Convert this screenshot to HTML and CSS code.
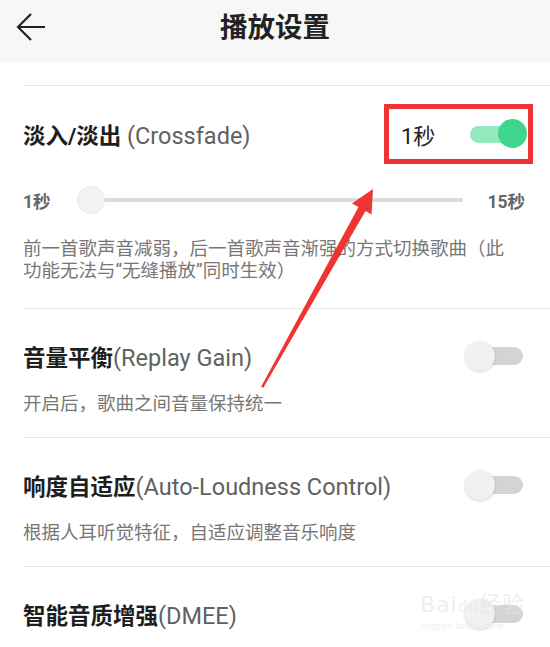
FILE: index.html
```html
<!DOCTYPE html>
<html lang="zh-CN">
<head>
    <meta charset="UTF-8">
    <meta name="viewport" content="width=device-width, initial-scale=1.0">
    <title>播放设置</title>
    <link rel="stylesheet" href="styles.css">
</head>
<body>
    <div class="page">
        <!-- 顶部栏 -->
        <div class="topbar">
            <div class="back">
                <svg width="30" height="30" viewBox="0 0 30 30">
                    <path d="M29 14 H3 M15 1 L2 14 L15 27" fill="none" stroke="#222" stroke-width="2.2"/>
                </svg>
            </div>
            <h1>播放设置</h1>
            <div></div>
        </div>

        <div class="list">
            <!-- 淡入淡出 -->
            <div class="item first">
                <div class="head crossfade">
                    <div class="name">淡入/淡出 <span class="en">(Crossfade)</span></div>
                    <div class="mark">
                        <span class="value">1秒</span>
                        <span class="switch on"></span>
                    </div>
                </div>
                <div class="slider">
                    <span class="end">1秒</span>
                    <div class="track"><span class="knob"></span></div>
                    <span class="end">15秒</span>
                </div>
                <p class="desc">前一首歌声音减弱，后一首歌声音渐强的方式切换歌曲（此功能无法与“无缝播放”同时生效）</p>
            </div>

            <!-- 音量平衡 -->
            <div class="item">
                <div class="head">
                    <div class="name">音量平衡<span class="en">(Replay Gain)</span></div>
                    <span class="switch"></span>
                </div>
                <p class="desc">开启后，歌曲之间音量保持统一</p>
            </div>

            <!-- 响度自适应 -->
            <div class="item">
                <div class="head">
                    <div class="name">响度自适应<span class="en">(Auto-Loudness Control)</span></div>
                    <span class="switch"></span>
                </div>
                <p class="desc">根据人耳听觉特征，自适应调整音乐响度</p>
            </div>

            <!-- 智能音质增强 -->
            <div class="item">
                <div class="head">
                    <div class="name">智能音质增强<span class="en">(DMEE)</span></div>
                    <span class="switch"></span>
                </div>
            </div>
        </div>

        <!-- 标注箭头 -->
        <svg class="arrow" width="550" height="647" viewBox="0 0 550 647">
            <polygon points="261,387 358.5,207 352,203.5 373,189 371.5,214.5 365.5,211 263.5,387.5" fill="#ef3434"/>
        </svg>

        <div class="watermark">Bai<span class="du">du</span>经验<small>jingyan.baidu.com</small></div>
    </div>
</body>
</html>
```

FILE: styles.css
```css
* {
    box-sizing: border-box;
}
body {
    margin: 0;
    background: #fff;
    font-family: Roboto, "Noto Sans CJK SC", sans-serif;
    color: #222;
}
.page {
    position: relative;
    width: 550px;
    height: 647px;
    overflow: hidden;
}
.topbar {
    height: 62px;
    background: #f7f7f7;
    display: grid;
    grid-template-columns: 1fr auto 1fr;
    align-items: center;
    padding-bottom: 6px;
}
.back {
    display: flex;
    align-items: center;
    height: 30px;
    padding-left: 16px;
}
.topbar h1 {
    margin: 0;
    font-size: 27.5px;
    font-weight: bold;
    color: #222;
    line-height: 30px;
}
.list {
    margin-top: 23px;
    padding-left: 23px;
}
.item {
    border-top: 1px solid #e6e6e6;
    padding: 27px 27px 21px 0;
}
.item.first {
    padding: 18px 17px 26px 0;
}
.head {
    display: flex;
    align-items: center;
    justify-content: space-between;
    height: 40px;
}
.head.crossfade {
    height: 60px;
}
.name {
    font-size: 22.5px;
    font-weight: bold;
    color: #1e1e1e;
}
.en {
    font-weight: normal;
    color: #616161;
    font-size: 23.5px;
}
.mark {
    width: 149px;
    height: 60px;
    border: 5px solid #ee3434;
    display: flex;
    align-items: center;
    justify-content: space-between;
    padding: 0 1px 0 12px;
}
.value {
    font-size: 22px;
    color: #222;
}
.switch {
    position: relative;
    width: 58px;
    height: 30px;
    flex: none;
}
.switch::before {
    content: "";
    position: absolute;
    left: 2px;
    right: 0;
    top: 6px;
    height: 18px;
    border-radius: 9px;
    background: #d4d4d4;
}
.switch::after {
    content: "";
    position: absolute;
    left: 0;
    top: 0;
    width: 30px;
    height: 30px;
    border-radius: 50%;
    background: #f1f1f1;
    box-shadow: 0 1px 3px rgba(0, 0, 0, 0.18);
}
.switch.on {
    width: 57px;
}
.switch.on::before {
    left: 0;
    right: 8px;
    top: 7px;
    height: 17px;
    background: #93e8bd;
}
.switch.on::after {
    left: auto;
    right: 0;
    width: 29px;
    height: 29px;
    background: #3dd68a;
    box-shadow: none;
}
.slider {
    display: flex;
    align-items: center;
    height: 30px;
    margin-top: 21px;
    padding-right: 8px;
}
.end {
    font-size: 17.5px;
    font-weight: bold;
    color: #666;
}
.track {
    flex: 1;
    height: 4px;
    background: #dcdcdc;
    margin: 0 24px 0 40px;
    position: relative;
}
.knob {
    position: absolute;
    left: -14px;
    top: -12px;
    width: 28px;
    height: 28px;
    border-radius: 50%;
    background: #f3f3f3;
    border: 1px solid #e8e8e8;
}
.desc {
    margin: 16px 0 0;
    font-size: 18.5px;
    line-height: 24px;
    color: #777;
}
.item.first .desc {
    margin-top: 23px;
    line-height: 22px;
    padding-right: 20px;
}
.arrow {
    position: absolute;
    left: 0;
    top: 0;
    pointer-events: none;
}
.watermark {
    position: absolute;
    left: 420px;
    top: 592px;
    font-family: "DejaVu Sans", sans-serif;
    font-size: 22px;
    color: rgba(228, 228, 228, 0.6);
    line-height: 26px;
    letter-spacing: 1px;
}
.watermark .du {
    font-size: 15px;
}
.watermark small {
    display: block;
    font-size: 9px;
    line-height: 12px;
    letter-spacing: 0;
}
```
